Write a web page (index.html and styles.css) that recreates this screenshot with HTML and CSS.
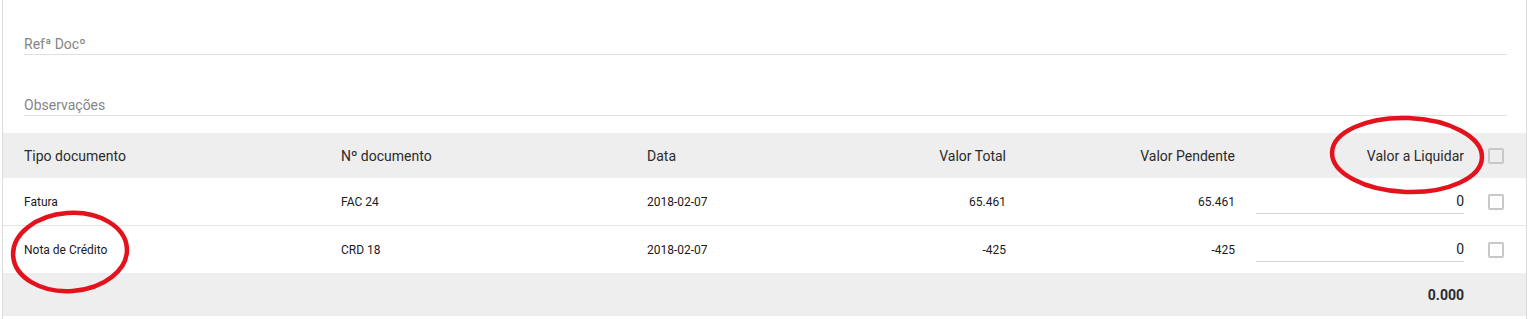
FILE: index.html
```html
<!DOCTYPE html>
<html lang="pt">
<head>
  <meta charset="UTF-8" />
  <title>Liquidação de documentos</title>
  <link rel="stylesheet" href="styles.css">
</head>
<body>

  <div class="card">
    <div class="field"><span class="placeholder">Refª Docº</span></div>
    <div class="field"><span class="placeholder">Observações</span></div>

    <table class="docs">
      <colgroup>
        <col style="width:317px">
        <col style="width:306px">
        <col style="width:214px">
        <col style="width:166px">
        <col style="width:229px">
        <col style="width:229px">
        <col style="width:62px">
      </colgroup>
      <thead>
        <tr>
          <th>Tipo documento</th>
          <th>Nº documento</th>
          <th>Data</th>
          <th class="num">Valor Total</th>
          <th class="num">Valor Pendente</th>
          <th class="num">Valor a Liquidar</th>
          <th class="check"><span class="box"></span></th>
        </tr>
      </thead>
      <tbody>
        <tr>
          <td>Fatura</td>
          <td>FAC 24</td>
          <td>2018-02-07</td>
          <td class="num">65.461</td>
          <td class="num">65.461</td>
          <td class="num"><div class="amount">0</div></td>
          <td class="check"><span class="box"></span></td>
        </tr>
        <tr>
          <td>Nota de Crédito</td>
          <td>CRD 18</td>
          <td>2018-02-07</td>
          <td class="num">-425</td>
          <td class="num">-425</td>
          <td class="num"><div class="amount">0</div></td>
          <td class="check"><span class="box"></span></td>
        </tr>
      </tbody>
      <tfoot>
        <tr>
          <td colspan="5"></td>
          <td class="num total">0.000</td>
          <td></td>
        </tr>
      </tfoot>
    </table>
  </div>

  <!-- marcas a vermelho por cima da captura -->
  <svg class="marks" viewBox="0 0 1529 319" width="1529" height="319" aria-hidden="true">
    <ellipse cx="70" cy="252" rx="57" ry="39" transform="rotate(-4 70 252)" />
    <ellipse cx="1407" cy="155" rx="75" ry="37" transform="rotate(2 1407 155)" />
  </svg>

</body>
</html>
```

FILE: styles.css
```css
body {
  margin: 0;
  background: #fff;
  font-family: Roboto, "Liberation Sans", sans-serif;
  color: #1a1a1a;
  position: relative;
  overflow: hidden;
}

.card {
  margin-left: 2px;
  width: 1525px;
  height: 319px;
  border-left: 1px solid #dcdcdc;
  border-right: 1px solid #dcdcdc;
  padding-top: 34px;
  box-sizing: border-box;
}

.field {
  margin: 0 19px 40px 21px;
  height: 20px;
  line-height: 20px;
  border-bottom: 1px solid #e0e0e0;
  font-size: 14px;
}

.field + .field {
  margin-bottom: 17px;
}

.placeholder {
  color: #858585;
}

table.docs {
  width: 1523px;
  border-collapse: collapse;
  table-layout: fixed;
}

.docs th, .docs td {
  padding: 0 0 0 21px;
  text-align: left;
  white-space: nowrap;
}

.docs th {
  height: 45px;
  background: #eeeeee;
  font-weight: normal;
  font-size: 14px;
  color: #2b2b2b;
}

.docs tbody td {
  height: 47px;
  font-size: 12px;
  border-bottom: 1px solid #e6e6e6;
}

.docs tbody tr:last-child td {
  border-bottom: none;
}

.docs tfoot td {
  height: 43px;
  background: #eeeeee;
}

.docs .num {
  text-align: right;
}

.docs .check {
  padding-left: 24px;
}

.box {
  display: block;
  width: 16px;
  height: 16px;
  box-sizing: border-box;
  border: 2px solid #c8c8c8;
  border-radius: 2px;
  background: #fff;
}

.docs th .box {
  background: transparent;
}

.amount {
  height: 24px;
  line-height: 24px;
  border-bottom: 1px solid #d6d6d6;
  font-size: 14px;
}

.total {
  font-weight: bold;
  font-size: 14px;
  color: #2b2b2b;
}

.marks {
  position: absolute;
  left: 0;
  top: 0;
  pointer-events: none;
}

.marks ellipse {
  fill: none;
  stroke: #e3121c;
  stroke-width: 4.5;
}
```
